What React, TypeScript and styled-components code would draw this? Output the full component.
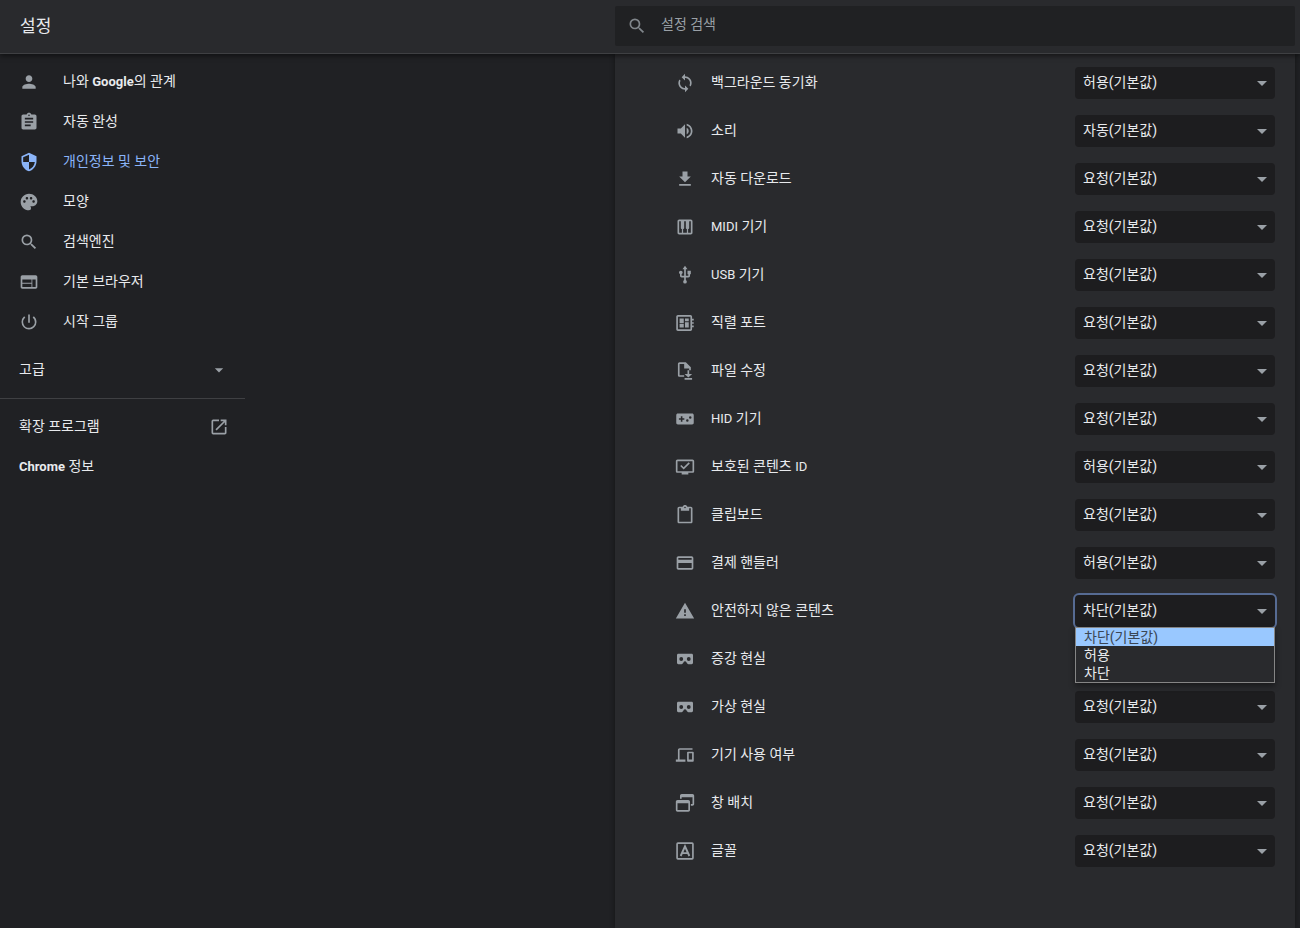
import React from "react";
import styled, { createGlobalStyle } from "styled-components";
import {
  MdArrowDropDown,
  MdAssignment,
  MdContentPaste,
  MdCreditCard,
  MdFileDownload,
  MdOpenInNew,
  MdPalette,
  MdPerson,
  MdPiano,
  MdPowerSettingsNew,
  MdSearch,
  MdSecurity,
  MdSync,
  MdUsb,
  MdVolumeUp,
  MdWarning,
  MdWeb,
} from "react-icons/md";

const colors = {
  page: "#202124",
  surface: "#292a2d",
  line: "#3f4043",
  text: "#e8eaed",
  muted: "#9aa0a6",
  accent: "#8ab4f8",
  field: "#1d1d1f",
};

const GlobalStyle = createGlobalStyle`
  *, *::before, *::after { box-sizing: border-box; }
  body {
    margin: 0;
    background: ${colors.page};
    color: ${colors.text};
    font-family: Roboto, "Noto Sans CJK KR", sans-serif;
    font-size: 14px;
    line-height: 20px;
  }
`;

const Page = styled.div`
  display: flex;
  flex-direction: column;
  min-height: 100vh;
`;

const Header = styled.header`
  position: relative;
  z-index: 2;
  display: flex;
  align-items: center;
  height: 54px;
  padding: 0 5px 2px 0;
  background: ${colors.surface};
  border-bottom: 1px solid ${colors.line};
  box-shadow: 0 2px 5px rgba(0, 0, 0, 0.5);
`;

const Title = styled.h1`
  flex: 1;
  margin: 0;
  padding-left: 20px;
  font-size: 17px;
  font-weight: 400;
  line-height: 24px;
`;

const SearchBox = styled.label`
  display: flex;
  align-items: center;
  flex: 0 1 680px;
  height: 40px;
  padding: 0 12px;
  gap: 14px;
  border-radius: 2px;
  background: #202123;
  color: #80868b;
`;

const SearchInput = styled.input`
  flex: 1;
  min-width: 0;
  height: 40px;
  padding: 0 0 4px;
  border: 0;
  outline: 0;
  background: transparent;
  color: ${colors.text};
  font: inherit;

  &::placeholder {
    color: ${colors.muted};
    opacity: 1;
  }
`;

const Body = styled.div`
  display: flex;
  flex: 1;
  padding-right: 5px;
`;

const Side = styled.div`
  flex: 1;
`;

const Text = styled.span`
  padding-bottom: 2px;
`;

const Latin = styled.span`
  font-size: 13px;
`;

const Sidebar = styled.nav`
  width: 245px;
  padding: 8px 0;

  ${Latin} {
    font-weight: 700;
  }
`;

const NavLink = styled.a<{ $active?: boolean }>`
  display: flex;
  align-items: center;
  gap: 24px;
  height: 40px;
  padding: 0 16px 0 19px;
  color: ${(p) => (p.$active ? colors.accent : colors.text)};
  text-decoration: none;

  svg {
    color: ${(p) => (p.$active ? colors.accent : colors.muted)};
  }
`;

const SpreadLink = styled(NavLink)`
  justify-content: space-between;
`;

const AdvancedButton = styled.button`
  display: flex;
  align-items: center;
  justify-content: space-between;
  width: 100%;
  height: 40px;
  margin: 8px 0;
  padding: 0 16px 0 19px;
  border: 0;
  background: transparent;
  color: ${colors.text};
  font: inherit;

  svg {
    color: ${colors.muted};
  }
`;

const Divider = styled.hr`
  height: 1px;
  margin: 0 0 8px;
  border: 0;
  background: ${colors.line};
`;

const Panel = styled.main`
  flex: 0 1 680px;
  padding: 5px 20px 48px 60px;
  background: ${colors.surface};
  box-shadow: 0 0 5px rgba(0, 0, 0, 0.4);
`;

const Row = styled.div`
  display: flex;
  align-items: center;
  gap: 16px;
  height: 48px;

  > svg {
    color: ${colors.muted};
  }
`;

const RowLabel = styled.label`
  flex: 1;
  padding-bottom: 2px;
`;

const SelectWrap = styled.div`
  position: relative;
  width: 200px;

  > svg {
    position: absolute;
    top: 4px;
    right: 1px;
    color: ${colors.muted};
    pointer-events: none;
  }
`;

const Select = styled.select<{ $open?: boolean }>`
  display: block;
  width: 100%;
  height: 32px;
  padding: 0 24px 2px 8px;
  appearance: none;
  border: 0;
  border-radius: 4px;
  outline: 0;
  background: ${colors.field};
  box-shadow: ${(p) => (p.$open ? "0 0 0 2px #566b93" : "none")};
  color: ${colors.text};
  font: inherit;
`;

const Menu = styled.ul`
  position: absolute;
  z-index: 1;
  top: 100%;
  left: 0;
  width: 100%;
  margin: 0;
  padding: 0;
  list-style: none;
  border: 1px solid #858585;
  background: ${colors.surface};
  box-shadow: 0 3px 6px rgba(0, 0, 0, 0.4);
`;

const MenuItem = styled.li<{ $selected?: boolean }>`
  height: 18px;
  padding-left: 8px;
  line-height: 18px;
  background: ${(p) => (p.$selected ? "#99c8ff" : "transparent")};
  color: ${(p) => (p.$selected ? "#3b4654" : colors.text)};
`;

const Glyph = ({ children }: { children: React.ReactNode }) => (
  <svg width="20" height="20" viewBox="0 0 24 24" fill="currentColor" aria-hidden="true">
    {children}
  </svg>
);

const SerialPortIcon = () => (
  <Glyph>
    <path
      fillRule="evenodd"
      d="M22.500 9V7h-2V4.500c0-1.100-.9-2-2-2h-15c-1.100 0-2 .9-2 2v15c0 1.100.9 2 2 2h15c1.100 0 2-.9 2-2V17h2v-2h-2v-2h2v-2h-2V9h2zm-4 10.500h-15v-15h15zM5.500 13h5v4.500h-5zm6.500-6.500h4.500V10H12zM5.500 6.500h5V12h-5zM12 11h4.500v6.500H12z"
    />
  </Glyph>
);

const FileEditIcon = () => (
  <Glyph>
    <path d="M13 1.500H5.500c-1.100 0-2 .9-2 2v13.500c0 1.100.9 2 2 2h5.500v-2H5.500V3.500H11V9h6v2h2V7.500z" />
    <path d="M17 11v4.500h3.500L16 19.800l-4.500-4.300H15V11zM11.500 20.500h9v2h-9z" />
  </Glyph>
);

const GamepadIcon = () => (
  <Glyph>
    <path
      fillRule="evenodd"
      d="M3.500 5.500h17c1.200 0 2 .8 2 2v9c0 1.200-.8 2-2 2h-17c-1.200 0-2-.8-2-2v-9c0-1.200.8-2 2-2zM7 8.800v2.300H4.700v1.900H7v2.300h1.900V13h2.300v-1.900H8.900V8.800zM14.800 12.200a1.500 1.500 0 1 0 0 3 1.500 1.500 0 0 0 0-3zM18.300 8.800a1.500 1.500 0 1 0 0 3 1.500 1.500 0 0 0 0-3z"
    />
  </Glyph>
);

const ProtectedContentIcon = () => (
  <Glyph>
    <path
      fillRule="evenodd"
      d="M21 3H3c-1.100 0-2 .9-2 2v12c0 1.100.9 2 2 2h5v2h8v-2h5c1.100 0 2-.9 2-2V5c0-1.100-.9-2-2-2zm0 14H3V5h18zM17.800 7.700l-1.400-1.400-6 6-2.800-2.800-1.400 1.400 4.200 4.200z"
    />
  </Glyph>
);

const HeadsetIcon = () => (
  <Glyph>
    <path
      fillRule="evenodd"
      d="M20 5.800H4c-.9 0-1.600.7-1.600 1.600v9.200c0 .9.700 1.600 1.600 1.600h4c.7 0 1.300-.4 1.600-1l.9-1.500c.3-.6.800-.9 1.500-.9s1.200.3 1.500.9l.9 1.500c.3.600.9 1 1.600 1h4c.9 0 1.600-.7 1.600-1.600V7.400c0-.9-.7-1.600-1.600-1.600zM7.500 9.700a2.300 2.300 0 1 1 0 4.600 2.300 2.300 0 0 1 0-4.600zM16.500 9.700a2.300 2.300 0 1 1 0 4.600 2.300 2.300 0 0 1 0-4.600z"
    />
  </Glyph>
);

const DevicesIcon = () => (
  <Glyph>
    <path
      fillRule="evenodd"
      d="M5.500 5.800H21v-2H5.500c-1.100 0-2 .9-2 2V17.500H1v2.700h11.500v-2.700h-7zM21.500 8h-6c-.6 0-1 .4-1 1v10.200c0 .6.400 1 1 1h6c.6 0 1-.4 1-1V9c0-.6-.4-1-1-1zm-1 9.500h-4V10h4z"
    />
  </Glyph>
);

const WindowPlacementIcon = () => (
  <Glyph>
    <path
      fillRule="evenodd"
      d="M8 1.200h13c1.100 0 2 .9 2 2v10c0 1.100-.9 2-2 2h-2v-2h2V5H8v2H6V3.200c0-1.100.9-2 2-2zM3 8.500h13c1.100 0 2 .9 2 2v10c0 1.100-.9 2-2 2H3c-1.100 0-2-.9-2-2v-10c0-1.100.9-2 2-2zM3 12.300v8.200h13v-8.200z"
    />
  </Glyph>
);

const FontIcon = () => (
  <Glyph>
    <rect x="2.500" y="2.500" width="19" height="19" rx="1" fill="none" stroke="currentColor" strokeWidth="2" />
    <path d="M6.800 18L12 6.500 17.200 18M8.800 14.500h6.400" fill="none" stroke="currentColor" strokeWidth="2.300" />
  </Glyph>
);

const navItems = [
  { icon: <MdPerson size={20} />, label: <>나와 <Latin>Google</Latin>의 관계</> },
  { icon: <MdAssignment size={20} />, label: "자동 완성" },
  { icon: <MdSecurity size={20} />, label: "개인정보 및 보안", active: true },
  { icon: <MdPalette size={20} />, label: "모양" },
  { icon: <MdSearch size={20} />, label: "검색엔진" },
  { icon: <MdWeb size={20} />, label: "기본 브라우저" },
  { icon: <MdPowerSettingsNew size={20} />, label: "시작 그룹" },
];

const ASK = "요청(기본값)";
const ALLOW = "허용(기본값)";
const AUTO = "자동(기본값)";
const BLOCK = "차단(기본값)";

type Permission = {
  id: string;
  icon: React.ReactNode;
  label: React.ReactNode;
  value: string;
  open?: boolean;
};

const permissions: Permission[] = [
  { id: "sync", icon: <MdSync size={20} />, label: "백그라운드 동기화", value: ALLOW },
  { id: "sound", icon: <MdVolumeUp size={20} />, label: "소리", value: AUTO },
  { id: "downloads", icon: <MdFileDownload size={20} />, label: "자동 다운로드", value: ASK },
  { id: "midi", icon: <MdPiano size={20} />, label: <><Latin>MIDI</Latin> 기기</>, value: ASK },
  { id: "usb", icon: <MdUsb size={20} />, label: <><Latin>USB</Latin> 기기</>, value: ASK },
  { id: "serial", icon: <SerialPortIcon />, label: "직렬 포트", value: ASK },
  { id: "files", icon: <FileEditIcon />, label: "파일 수정", value: ASK },
  { id: "hid", icon: <GamepadIcon />, label: <><Latin>HID</Latin> 기기</>, value: ASK },
  { id: "protected", icon: <ProtectedContentIcon />, label: <>보호된 콘텐츠 <Latin>ID</Latin></>, value: ALLOW },
  { id: "clipboard", icon: <MdContentPaste size={20} />, label: "클립보드", value: ASK },
  { id: "payment", icon: <MdCreditCard size={20} />, label: "결제 핸들러", value: ALLOW },
  { id: "insecure", icon: <MdWarning size={20} />, label: "안전하지 않은 콘텐츠", value: BLOCK, open: true },
  { id: "ar", icon: <HeadsetIcon />, label: "증강 현실", value: ASK },
  { id: "vr", icon: <HeadsetIcon />, label: "가상 현실", value: ASK },
  { id: "idle", icon: <DevicesIcon />, label: "기기 사용 여부", value: ASK },
  { id: "windows", icon: <WindowPlacementIcon />, label: "창 배치", value: ASK },
  { id: "fonts", icon: <FontIcon />, label: "글꼴", value: ASK },
];

const PermissionRow = ({ id, icon, label, value, open }: Permission) => (
  <Row>
    {icon}
    <RowLabel htmlFor={id}>{label}</RowLabel>
    <SelectWrap>
      <Select id={id} defaultValue={value} $open={open}>
        <option>{value}</option>
        <option>허용</option>
        <option>차단</option>
      </Select>
      <MdArrowDropDown size={24} />
      {open && (
        <Menu role="listbox" aria-labelledby={id}>
          <MenuItem role="option" aria-selected="true" $selected>
            {value}
          </MenuItem>
          <MenuItem role="option" aria-selected="false">허용</MenuItem>
          <MenuItem role="option" aria-selected="false">차단</MenuItem>
        </Menu>
      )}
    </SelectWrap>
  </Row>
);

export default function App() {
  return (
    <Page>
      <GlobalStyle />
      <Header>
        <Title>설정</Title>
        <SearchBox>
          <MdSearch size={20} />
          <SearchInput type="text" placeholder="설정 검색" aria-label="설정 검색" />
        </SearchBox>
      </Header>
      <Body>
        <Side>
          <Sidebar>
            {navItems.map((item, i) => (
              <NavLink key={i} href="#" $active={item.active}>
                {item.icon}
                <Text>{item.label}</Text>
              </NavLink>
            ))}
            <AdvancedButton type="button">
              <Text>고급</Text>
              <MdArrowDropDown size={20} />
            </AdvancedButton>
            <Divider />
            <SpreadLink href="#">
              <Text>확장 프로그램</Text>
              <MdOpenInNew size={20} />
            </SpreadLink>
            <SpreadLink href="#">
              <Text>
                <Latin>Chrome</Latin> 정보
              </Text>
            </SpreadLink>
          </Sidebar>
        </Side>
        <Panel>
          {permissions.map((p) => (
            <PermissionRow key={p.id} {...p} />
          ))}
        </Panel>
      </Body>
    </Page>
  );
}
